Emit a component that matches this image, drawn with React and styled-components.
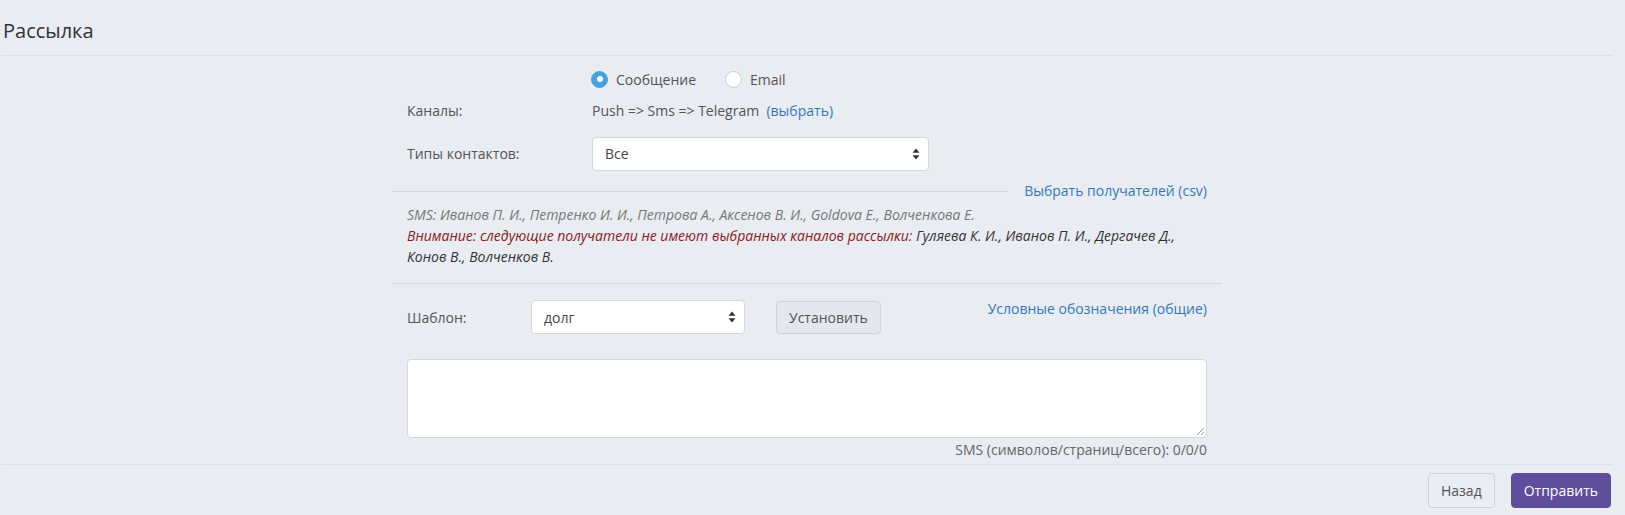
import styled, { createGlobalStyle } from 'styled-components'

const GlobalStyle = createGlobalStyle`
  body {
    margin: 0;
    background: #e9ecf1;
    font-family: "Open Sans", "Liberation Sans", sans-serif;
    font-size: 14px;
    color: #555;
  }
`

const recipientsSms = 'Иванов П. И., Петренко И. И., Петрова А., Аксенов В. И., Goldova E., Волченкова Е.'

const SortArrows = () => (
  <svg width="8" height="12" viewBox="0 0 8 12">
    <path d="M4 0.5 L7.5 4.8 H0.5 Z" fill="#333" />
    <path d="M4 11.5 L7.5 7.2 H0.5 Z" fill="#333" />
  </svg>
)

const Select = ({ value, width }) => (
  <SelectBox $width={width}>
    <span>{value}</span>
    <ArrowSlot>
      <SortArrows />
    </ArrowSlot>
  </SelectBox>
)

const App = () => {
  return (
    <Page>
      <GlobalStyle />
      <Header>
        <Title>Рассылка</Title>
      </Header>

      <Body>
        <Form>
          <RadioRow>
            <RadioLabel>
              <Radio $checked />
              Сообщение
            </RadioLabel>
            <RadioLabel>
              <Radio />
              Email
            </RadioLabel>
          </RadioRow>

          <FieldRow $top={11}>
            <Label>Каналы:</Label>
            <Value>
              Push =&gt; Sms =&gt; Telegram&nbsp;&nbsp;<Link>(выбрать)</Link>
            </Value>
          </FieldRow>

          <FieldRow $top={16}>
            <Label>Типы контактов:</Label>
            <Select value="Все" width={337} />
          </FieldRow>

          <DividerRow>
            <Line />
            <Link>Выбрать получателей (csv)</Link>
          </DividerRow>

          <Recipients>
            <Muted>SMS: {recipientsSms}</Muted>
            <br />
            <Warning>Внимание: следующие получатели не имеют выбранных каналов рассылки:</Warning>{' '}
            <Names>Гуляева К. И., Иванов П. И., Дергачев Д.,</Names>
            <br />
            <Names>Конов В., Волченков В.</Names>
          </Recipients>

          <Separator />

          <TemplateRow>
            <Label>Шаблон:</Label>
            <Select value="долг" width={214} />
            <PlainButton>Установить</PlainButton>
            <TopLink>Условные обозначения (общие)</TopLink>
          </TemplateRow>

          <MessageBox />
          <Counter>SMS (символов/страниц/всего): 0/0/0</Counter>
        </Form>
      </Body>

      <Footer>
        <PlainButton $tall>Назад</PlainButton>
        <PrimaryButton>Отправить</PrimaryButton>
      </Footer>
    </Page>
  )
}

export default App

const Page = styled.div`
  padding: 0 13px 0 2px;
`

const Header = styled.div`
  height: 55px;
  border-bottom: 1px solid #dcdfe4;
`

const Title = styled.h1`
  margin: 0;
  padding: 17px 0 0 1px;
  font-size: 20px;
  line-height: 28px;
  font-weight: 400;
  color: #333;
`

const Body = styled.div`
  padding-bottom: 5px;
`

const Form = styled.div`
  width: 830px;
  margin: 0 auto;
`

const RadioRow = styled.div`
  display: flex;
  gap: 29px;
  margin-top: 12px;
  padding-left: 199px;
  height: 22px;
  align-items: center;
`

const RadioLabel = styled.label`
  display: flex;
  align-items: center;
  gap: 8px;
  color: #555;
`

const Radio = styled.span`
  box-sizing: border-box;
  width: 17px;
  height: 17px;
  border-radius: 50%;
  background: ${p => (p.$checked ? '#45a1e0' : '#fff')};
  border: 1px solid ${p => (p.$checked ? '#45a1e0' : '#c9cbcf')};
  display: flex;
  align-items: center;
  justify-content: center;

  &::after {
    content: '';
    width: 6px;
    height: 6px;
    border-radius: 50%;
    background: ${p => (p.$checked ? '#fff' : 'transparent')};
  }
`

const FieldRow = styled.div`
  display: grid;
  grid-template-columns: 185px 1fr;
  align-items: center;
  padding: 0 15px;
  margin-top: ${p => p.$top}px;
  line-height: 20px;
`

const Label = styled.div`
  color: #555;
`

const Value = styled.div`
  color: #555;
`

const Link = styled.span`
  color: #3479b7;
`

const SelectBox = styled.div`
  box-sizing: border-box;
  width: ${p => p.$width}px;
  height: 34px;
  background: #fff;
  border: 1px solid #d3d6db;
  border-radius: 4px;
  display: flex;
  align-items: center;
  justify-content: space-between;
  padding: 0 8px 0 12px;
  color: #444;
`

const ArrowSlot = styled.span`
  display: flex;
`

const DividerRow = styled.div`
  display: flex;
  align-items: center;
  gap: 16px;
  margin-top: 10px;
  padding-right: 15px;
  line-height: 20px;
`

const Line = styled.div`
  flex: 1;
  height: 1px;
  background: #d4d7dc;
`

const Recipients = styled.div`
  margin-top: 3px;
  padding: 0 15px;
  font-size: 14px;
  line-height: 21px;
  font-style: italic;
`

const Muted = styled.span`
  color: #777;
`

const Warning = styled.span`
  color: #8b1a1a;
`

const Names = styled.span`
  color: #333;
`

const Separator = styled.div`
  margin-top: 16px;
  height: 1px;
  background: #d4d7dc;
`

const TemplateRow = styled.div`
  display: flex;
  align-items: center;
  margin-top: 16px;
  padding: 0 15px;

  & > ${Label} {
    width: 124px;
  }
`

const PlainButton = styled.button`
  box-sizing: border-box;
  height: ${p => (p.$tall ? 35 : 33)}px;
  margin-left: ${p => (p.$tall ? 0 : 31)}px;
  padding: 0 12px;
  font-family: inherit;
  font-size: 14px;
  color: #555;
  background: ${p => (p.$tall ? '#eaedf2' : '#e4e7eb')};
  border: 1px solid #cfd2d6;
  border-radius: 4px;
`

const TopLink = styled.span`
  margin-left: auto;
  align-self: flex-start;
  line-height: 18px;
  color: #3479b7;
`

const MessageBox = styled.div`
  box-sizing: border-box;
  margin: 25px 15px 0;
  height: 79px;
  background: #fff;
  border: 1px solid #d3d6db;
  border-radius: 4px;
  position: relative;

  &::after {
    content: '';
    position: absolute;
    right: 2px;
    bottom: 2px;
    width: 7px;
    height: 7px;
    background: linear-gradient(135deg, transparent 45%, #999 45%, #999 55%, transparent 55%, transparent 75%, #999 75%, #999 85%, transparent 85%);
  }
`

const Counter = styled.div`
  margin-top: 3px;
  padding: 0 15px;
  text-align: right;
  font-size: 14px;
  line-height: 18px;
  color: #666;
`

const Footer = styled.div`
  border-top: 1px solid #dcdfe4;
  padding: 8px 1px 0 0;
  display: flex;
  justify-content: flex-end;
  gap: 16px;
`

const PrimaryButton = styled.button`
  box-sizing: border-box;
  height: 35px;
  padding: 0 12px;
  font-family: inherit;
  font-size: 14px;
  color: #fff;
  background: #5f4e9b;
  border: 1px solid #5f4e9b;
  border-radius: 4px;
`
